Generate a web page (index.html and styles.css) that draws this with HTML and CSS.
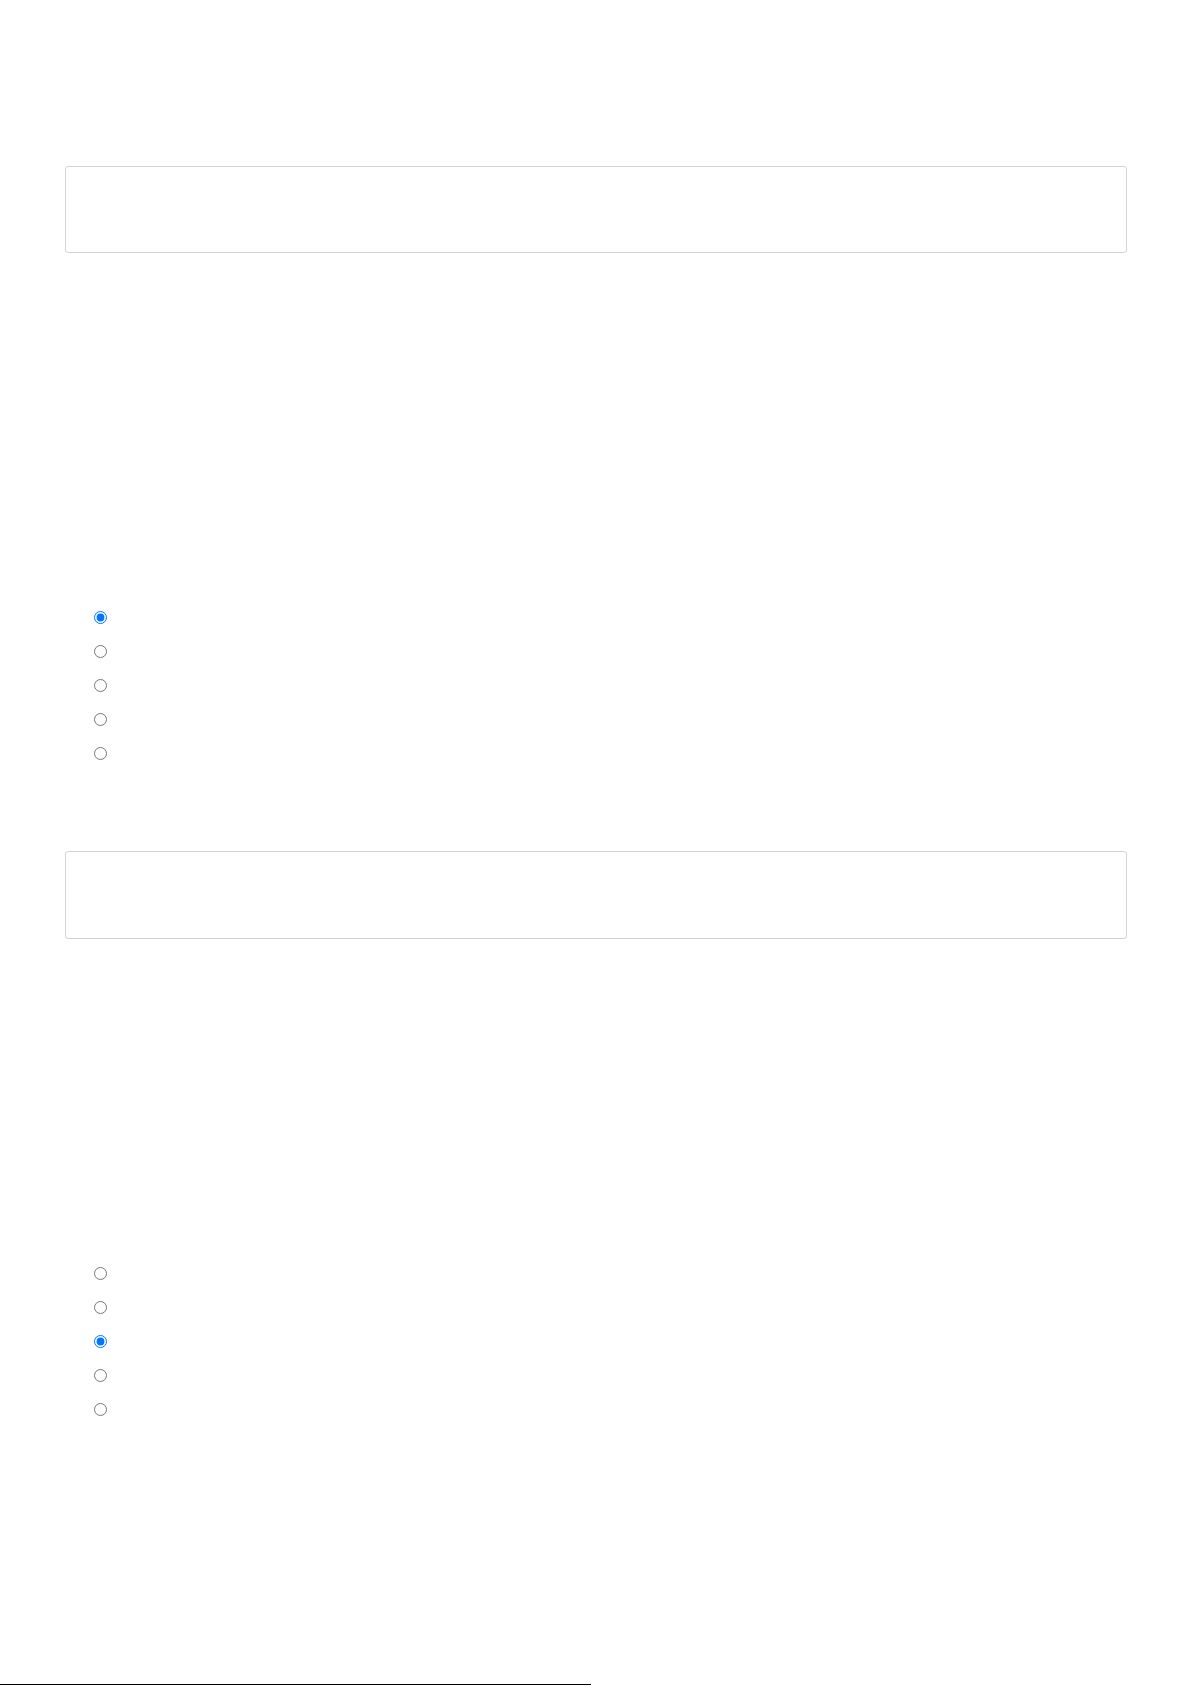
FILE: index.html
```html
<!DOCTYPE html>
<html lang="en">
<head>
    <meta charset="UTF-8">
    <meta name="viewport" content="width=device-width, initial-scale=1.0">
    <title>Quiz</title>
    <link rel="stylesheet" href="styles.css">
</head>
<body>
    <main class="page">
        <!-- Question 1 -->
        <section class="question">
            <div class="answer-box"></div>
            <ul class="options">
                <li><input type="radio" name="q1" value="a" checked></li>
                <li><input type="radio" name="q1" value="b"></li>
                <li><input type="radio" name="q1" value="c"></li>
                <li><input type="radio" name="q1" value="d"></li>
                <li><input type="radio" name="q1" value="e"></li>
            </ul>
        </section>

        <!-- Question 2 -->
        <section class="question question-second">
            <div class="answer-box"></div>
            <ul class="options">
                <li><input type="radio" name="q2" value="a"></li>
                <li><input type="radio" name="q2" value="b"></li>
                <li><input type="radio" name="q2" value="c" checked></li>
                <li><input type="radio" name="q2" value="d"></li>
                <li><input type="radio" name="q2" value="e"></li>
            </ul>
        </section>

        <div class="page-end"></div>
    </main>
</body>
</html>
```

FILE: styles.css
```css
body {
    font-family: "Liberation Sans", Arial, sans-serif;
    background-color: #fff;
    color: #212529;
    margin: 0;
    padding: 0;
}

.page {
    padding: 166px 64px 0 65px;
}

.answer-box {
    height: 87px;
    box-sizing: border-box;
    border: 1px solid #ced4da;
    border-radius: 3px;
}

.question-second {
    margin-top: 81px;
}

.question-second .answer-box {
    height: 88px;
}

.options {
    list-style: none;
    margin: 347px 0 0;
    padding: 0 0 0 24px;
}

.question-second .options {
    margin-top: 317px;
}

.options li {
    height: 34px;
    display: flex;
    align-items: center;
}

.options input {
    margin: 0 3px 0 5px;
}

.page-end {
    margin: 258px 0 0 -65px;
    width: 591px;
    height: 1px;
    background-color: #000;
}
```
